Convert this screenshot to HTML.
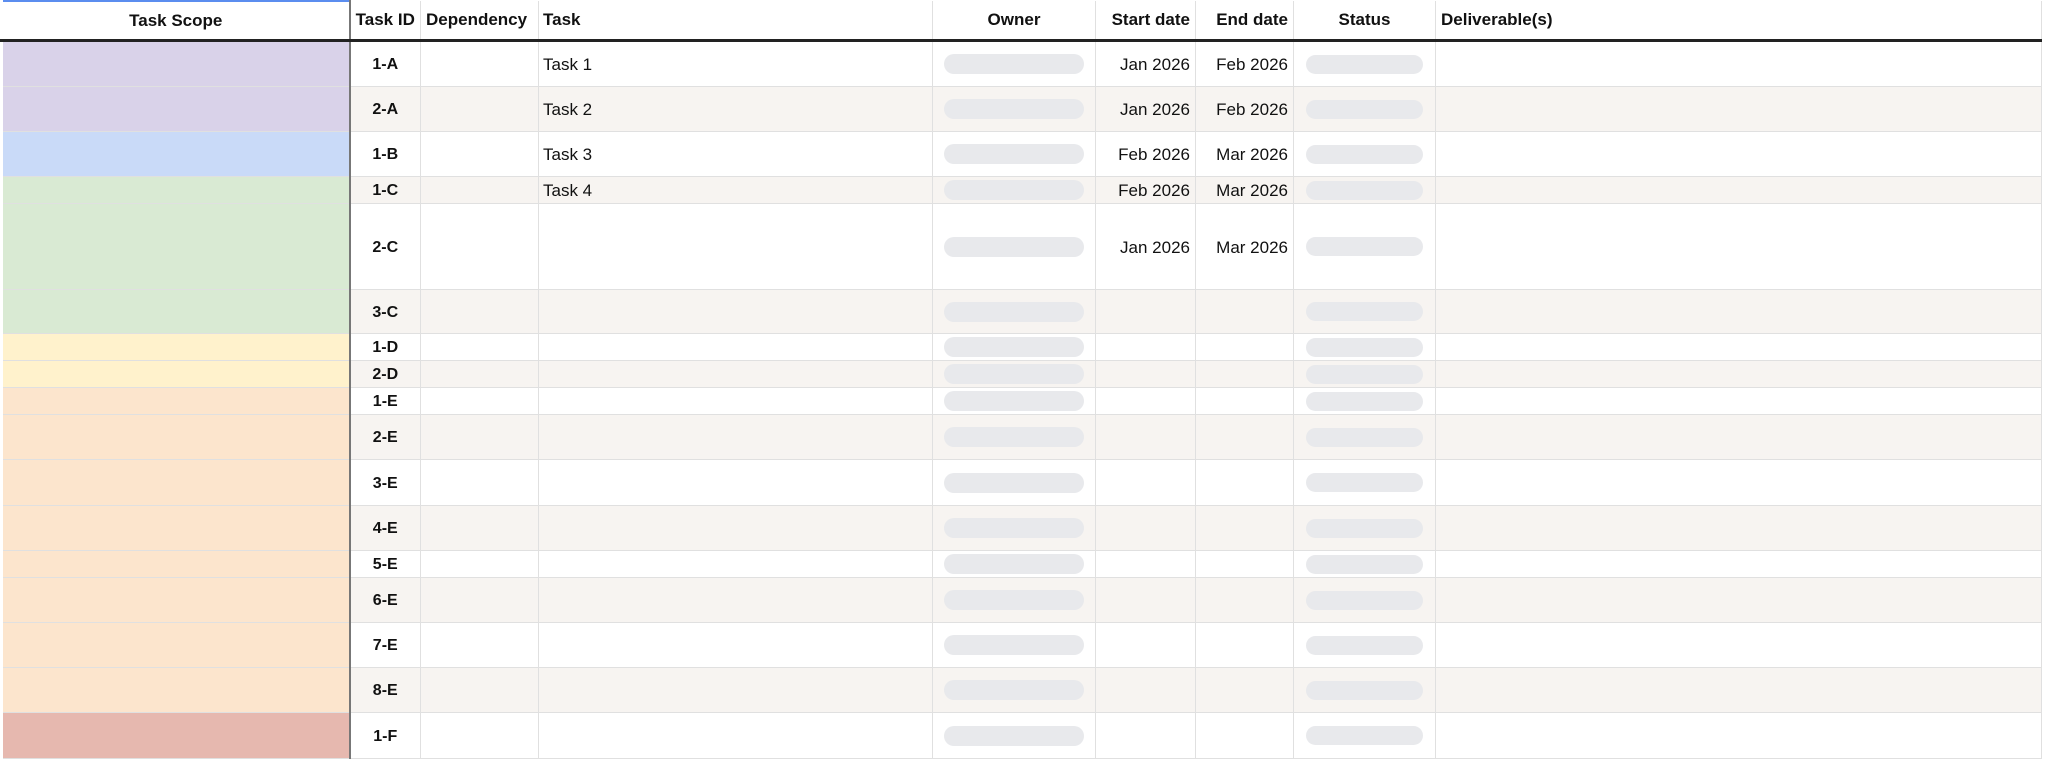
<!DOCTYPE html>
<html><head><meta charset="utf-8"><style>
body{margin:0;background:#fff;width:2048px;height:761px;overflow:hidden;font-family:"Liberation Sans",sans-serif;font-size:17px;color:#111}
table{border-collapse:collapse;table-layout:fixed;width:2040px}
td,th{border:1px solid #e0e0e0;padding:0 5px;overflow:hidden;white-space:nowrap}
td{padding-top:2px}
th{height:37px;border-bottom:3px solid #222;font-weight:bold;border-top:none}
td.id{text-align:center;font-weight:bold;font-size:16px}
td.sc{border-right:2px solid #777;border-left:3px solid #fff}
tr.b td{background:#f7f4f1}
td.r{text-align:right}
.p{height:20px;border-radius:10px;background:#e8e9ec;margin:0 11px}
.s{height:19px;border-radius:10px;background:#e8e9ec;margin:0 12px}
td.o,td.st{padding:0}
</style></head><body>
<table>
<colgroup><col style="width:348px"><col style="width:71px"><col style="width:118px"><col style="width:394px"><col style="width:163px"><col style="width:100px"><col style="width:98px"><col style="width:142px"><col style="width:606px"></colgroup>
<tr><th style="border-top:2px solid #5b8def;border-right:2px solid #777;border-left:3px solid #fff">Task Scope</th><th style="padding:0 2px">Task ID</th><th style="text-align:left">Dependency</th><th style="text-align:left;padding-left:4px">Task</th><th>Owner</th><th style="text-align:right">Start date</th><th style="text-align:right">End date</th><th>Status</th><th style="text-align:left">Deliverable(s)</th></tr>
<tr style="height:46px"><td class="sc" style="background:#d9d2e9"></td><td class="id">1-A</td><td></td><td style="padding-left:4px">Task 1</td><td class="o"><div class="p"></div></td><td class="r">Jan 2026</td><td class="r">Feb 2026</td><td class="st"><div class="s"></div></td><td></td></tr>
<tr class="b" style="height:45px"><td class="sc" style="background:#d9d2e9"></td><td class="id">2-A</td><td></td><td style="padding-left:4px">Task 2</td><td class="o"><div class="p"></div></td><td class="r">Jan 2026</td><td class="r">Feb 2026</td><td class="st"><div class="s"></div></td><td></td></tr>
<tr style="height:45px"><td class="sc" style="background:#c9daf8"></td><td class="id">1-B</td><td></td><td style="padding-left:4px">Task 3</td><td class="o"><div class="p"></div></td><td class="r">Feb 2026</td><td class="r">Mar 2026</td><td class="st"><div class="s"></div></td><td></td></tr>
<tr class="b" style="height:27px"><td class="sc" style="background:#d9ead3"></td><td class="id">1-C</td><td></td><td style="padding-left:4px">Task 4</td><td class="o"><div class="p"></div></td><td class="r">Feb 2026</td><td class="r">Mar 2026</td><td class="st"><div class="s"></div></td><td></td></tr>
<tr style="height:86px"><td class="sc" style="background:#d9ead3"></td><td class="id">2-C</td><td></td><td></td><td class="o"><div class="p"></div></td><td class="r">Jan 2026</td><td class="r">Mar 2026</td><td class="st"><div class="s"></div></td><td></td></tr>
<tr class="b" style="height:44px"><td class="sc" style="background:#d9ead3"></td><td class="id">3-C</td><td></td><td></td><td class="o"><div class="p"></div></td><td></td><td></td><td class="st"><div class="s"></div></td><td></td></tr>
<tr style="height:27px"><td class="sc" style="background:#fff2cc"></td><td class="id">1-D</td><td></td><td></td><td class="o"><div class="p"></div></td><td></td><td></td><td class="st"><div class="s"></div></td><td></td></tr>
<tr class="b" style="height:27px"><td class="sc" style="background:#fff2cc"></td><td class="id">2-D</td><td></td><td></td><td class="o"><div class="p"></div></td><td></td><td></td><td class="st"><div class="s"></div></td><td></td></tr>
<tr style="height:27px"><td class="sc" style="background:#fce5cd"></td><td class="id">1-E</td><td></td><td></td><td class="o"><div class="p"></div></td><td></td><td></td><td class="st"><div class="s"></div></td><td></td></tr>
<tr class="b" style="height:45px"><td class="sc" style="background:#fce5cd"></td><td class="id">2-E</td><td></td><td></td><td class="o"><div class="p"></div></td><td></td><td></td><td class="st"><div class="s"></div></td><td></td></tr>
<tr style="height:46px"><td class="sc" style="background:#fce5cd"></td><td class="id">3-E</td><td></td><td></td><td class="o"><div class="p"></div></td><td></td><td></td><td class="st"><div class="s"></div></td><td></td></tr>
<tr class="b" style="height:45px"><td class="sc" style="background:#fce5cd"></td><td class="id">4-E</td><td></td><td></td><td class="o"><div class="p"></div></td><td></td><td></td><td class="st"><div class="s"></div></td><td></td></tr>
<tr style="height:27px"><td class="sc" style="background:#fce5cd"></td><td class="id">5-E</td><td></td><td></td><td class="o"><div class="p"></div></td><td></td><td></td><td class="st"><div class="s"></div></td><td></td></tr>
<tr class="b" style="height:45px"><td class="sc" style="background:#fce5cd"></td><td class="id">6-E</td><td></td><td></td><td class="o"><div class="p"></div></td><td></td><td></td><td class="st"><div class="s"></div></td><td></td></tr>
<tr style="height:45px"><td class="sc" style="background:#fce5cd"></td><td class="id">7-E</td><td></td><td></td><td class="o"><div class="p"></div></td><td></td><td></td><td class="st"><div class="s"></div></td><td></td></tr>
<tr class="b" style="height:45px"><td class="sc" style="background:#fce5cd"></td><td class="id">8-E</td><td></td><td></td><td class="o"><div class="p"></div></td><td></td><td></td><td class="st"><div class="s"></div></td><td></td></tr>
<tr style="height:46px"><td class="sc" style="background:#e6b8af"></td><td class="id">1-F</td><td></td><td></td><td class="o"><div class="p"></div></td><td></td><td></td><td class="st"><div class="s"></div></td><td></td></tr>
</table>
</body></html>
